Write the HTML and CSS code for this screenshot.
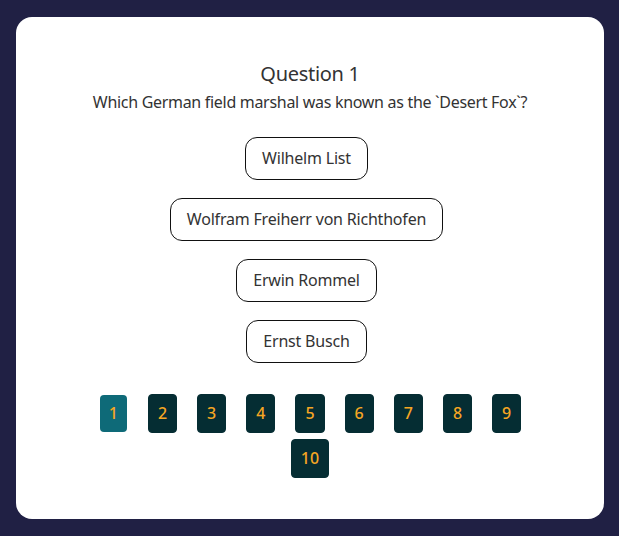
FILE: index.html
```html
<!DOCTYPE html>
<html>
<head>
<meta charset="utf-8">
<link rel="stylesheet" href="styles.css">
</head>
<body>
<main class="card">
  <h1 class="title">Question 1</h1>
  <p class="question">Which German field marshal was known as the `Desert Fox`?</p>
  <div class="answers">
    <button class="answer">Wilhelm List</button>
    <button class="answer">Wolfram Freiherr von Richthofen</button>
    <button class="answer">Erwin Rommel</button>
    <button class="answer">Ernst Busch</button>
  </div>
  <nav class="pager">
    <button class="page active">1</button>
    <button class="page">2</button>
    <button class="page">3</button>
    <button class="page">4</button>
    <button class="page">5</button>
    <button class="page">6</button>
    <button class="page">7</button>
    <button class="page">8</button>
    <button class="page">9</button>
    <button class="page">10</button>
  </nav>
</main>
</body>
</html>
```
FILE: styles.css
```css
html, body {
  margin: 0;
  padding: 0;
  background: #202044;
}
body {
  padding: 17px 15px 17px 16px;
  font-family: "Noto Sans", "Open Sans", sans-serif;
  color: #333333;
}
.card {
  background: #ffffff;
  border-radius: 16px;
  width: 588px;
  box-sizing: border-box;
  padding: 40px 50px 41px;
  display: flex;
  flex-direction: column;
  align-items: center;
}
.title {
  margin: 5px 0 0;
  font-size: 20px;
  font-weight: 400;
  line-height: 24px;
  letter-spacing: -0.3px;
}
.question {
  margin: 7px 0 0;
  font-size: 16px;
  line-height: 19px;
  letter-spacing: -0.3px;
}
.answers {
  margin: 25px 7px 0 0;
  display: flex;
  flex-direction: column;
  align-items: center;
  gap: 18px;
}
.answer {
  font-family: inherit;
  font-size: 16px;
  line-height: 19px;
  letter-spacing: -0.2px;
  color: #333333;
  background: #ffffff;
  border: 1px solid #111111;
  border-radius: 12px;
  padding: 11px 16px;
  margin: 0;
}
.pager {
  margin-top: 31px;
  display: flex;
  flex-wrap: wrap;
  justify-content: center;
  row-gap: 6px;
  width: 100%;
}
.page {
  font-family: inherit;
  font-size: 16px;
  line-height: 19px;
  font-weight: 500;
  color: #f5a623;
  background: #052d33;
  border: 1px solid #052d33;
  border-radius: 4px;
  padding: 9px 9px;
  margin: 0 10px;
}
.page.active {
  background: #0e6a78;
  border: 0;
  padding: 9px 9px;
  margin: 1px 11px;
}
```
